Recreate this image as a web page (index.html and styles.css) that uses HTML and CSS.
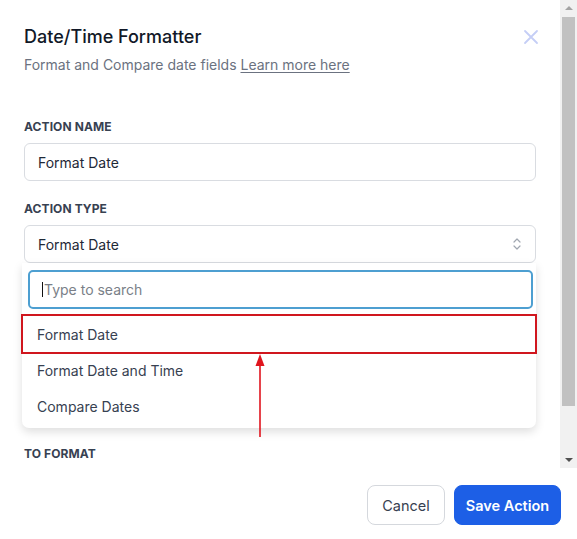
FILE: index.html
```html
<!DOCTYPE html>
<html lang="en">
<head>
<meta charset="utf-8">
<title>Date/Time Formatter</title>
<link rel="stylesheet" href="styles.css">
</head>
<body>
<div class="modal">
  <div class="scroll">
    <div class="content">
      <div class="header">
        <h1 class="title">Date/Time Formatter</h1>
        <button class="close" aria-label="Close">
          <svg width="16" height="16" viewBox="0 0 16 16"><path d="M2 2 L14 14 M14 2 L2 14" stroke="#c5cef6" stroke-width="1.8" stroke-linecap="round"/></svg>
        </button>
      </div>
      <p class="subtitle">Format and Compare date fields <a class="link" href="#">Learn more here</a></p>

      <div class="field">
        <div class="label">ACTION NAME</div>
        <div class="input">Format Date</div>
      </div>

      <div class="field">
        <div class="label">ACTION TYPE</div>
        <div class="input select">
          <span>Format Date</span>
          <svg class="chev" width="10" height="16" viewBox="0 0 10 16"><path d="M2 6 L5 3 L8 6 M2 10 L5 13 L8 10" fill="none" stroke="#a0a6b0" stroke-width="1.2" stroke-linecap="round" stroke-linejoin="round"/></svg>
        </div>
        <div class="dropdown">
          <div class="search"><span class="caret"></span><span class="placeholder">Type to search</span></div>
          <div class="option selected">Format Date</div>
          <div class="option">Format Date and Time</div>
          <div class="option">Compare Dates</div>
          <svg class="arrow" width="12" height="84" viewBox="0 0 12 84"><path d="M6 10 L6 83" stroke="#e0141e" stroke-width="1.6"/><path d="M6 0 L10.5 12 L1.5 12 Z" fill="#e0141e"/></svg>
        </div>
      </div>

      <div class="field last">
        <div class="label">TO FORMAT</div>
      </div>
    </div>
    <div class="scrollbar">
      <div class="sb-btn"><span class="tri up"></span></div>
      <div class="sb-track"><div class="sb-thumb"></div></div>
      <div class="sb-btn"><span class="tri down"></span></div>
    </div>
  </div>
  <div class="footer">
    <button class="btn cancel">Cancel</button>
    <button class="btn save">Save Action</button>
  </div>
</div>
</body>
</html>
```

FILE: styles.css
```css
* { box-sizing: border-box; }
html, body { margin: 0; padding: 0; background: #ffffff; }
body {
  font-family: Inter, "Noto Sans", "Liberation Sans", sans-serif;
  width: 577px;
  height: 539px;
  overflow: hidden;
}
.modal {
  display: flex;
  flex-direction: column;
  width: 577px;
  height: 539px;
  background: #fff;
}
.scroll {
  display: flex;
  height: 468px;
  overflow: hidden;
}
.content {
  flex: 1;
  padding: 23px 24px 0 24px;
  overflow: hidden;
}
.header {
  display: flex;
  justify-content: space-between;
  align-items: flex-start;
}
.title {
  margin: 0;
  font-size: 18px;
  line-height: 28px;
  font-weight: 500;
  color: #111827;
}
.close {
  border: 0;
  background: none;
  padding: 0;
  margin: 6px -3px 0 0;
  width: 16px;
  height: 16px;
}
.close svg { display: block; }
.subtitle {
  margin: 4px 0 0 0;
  font-size: 14px;
  line-height: 20px;
  color: #6b7280;
}
.link { color: #6b7280; text-decoration: underline; text-underline-offset: 2px; }
.field { margin-top: 44px; }
.field + .field { margin-top: 20px; }
.field.last { margin-top: 18px; }
.label {
  font-size: 12px;
  line-height: 16px;
  font-weight: 700;
  color: #374151;
  margin-bottom: 8px;
  letter-spacing: 0.1px;
}
.input {
  height: 38px;
  border: 1px solid #d9dce1;
  border-radius: 6px;
  padding: 0 13px;
  display: flex;
  align-items: center;
  font-size: 14px;
  color: #1f2937;
  background: #fff;
}
.select { justify-content: space-between; padding-right: 13px; }
.chev { display: block; }
.dropdown {
  position: relative;
  margin: 0 0 0 -2px;
  background: #fff;
  border-radius: 0 0 7px 7px;
  box-shadow: 0 4px 10px rgba(0,0,0,0.13);
  padding: 7px 3px 4px 6px;
}
.search {
  height: 39px;
  border: 2px solid #4d9fd1;
  border-radius: 5px;
  display: flex;
  align-items: center;
  padding-left: 12px;
  font-size: 14px;
}
.caret {
  width: 1px;
  height: 15px;
  background: #111;
  margin-right: 1px;
}
.placeholder { color: #7a7f88; }
.option {
  height: 36px;
  display: flex;
  align-items: center;
  padding-left: 14px;
  margin-left: -5px;
  margin-right: -2px;
  font-size: 14px;
  color: #374151;
}
.search + .option { margin-top: 7px; }
.option.selected { outline: 2px solid #d0161e; outline-offset: 0; }
.arrow {
  position: absolute;
  left: 232px;
  top: 91px;
}
.scrollbar {
  width: 17px;
  display: flex;
  flex-direction: column;
  background: #f1f1f1;
}
.sb-btn {
  height: 16px;
  display: flex;
  align-items: center;
  justify-content: center;
}
.sb-track { flex: 1; padding: 1px 2px 1px 2px; display: flex; }
.sb-thumb { flex: 1; background: #c1c1c1; margin-bottom: 45px; }
.tri { width: 0; height: 0; border-left: 4px solid transparent; border-right: 4px solid transparent; }
.tri.up { border-bottom: 4px solid #a3a3a3; }
.tri.down { border-top: 4px solid #505050; }
.footer {
  flex: 1;
  display: flex;
  justify-content: flex-end;
  align-items: flex-start;
  gap: 9px;
  padding: 17px 16px 0 0;
}
.btn {
  height: 40px;
  border-radius: 8px;
  font-family: Inter, "Noto Sans", "Liberation Sans", sans-serif;
  font-size: 14.5px;
  white-space: nowrap;
  cursor: pointer;
}
.cancel {
  width: 78px;
  padding: 0;
  background: #fff;
  border: 1px solid #d5d8dd;
  color: #374151;
}
.save {
  width: 107px;
  padding: 0;
  background: #1d5fe6;
  border: 1px solid #1d5fe6;
  color: #fff;
  font-weight: 600;
}
```
